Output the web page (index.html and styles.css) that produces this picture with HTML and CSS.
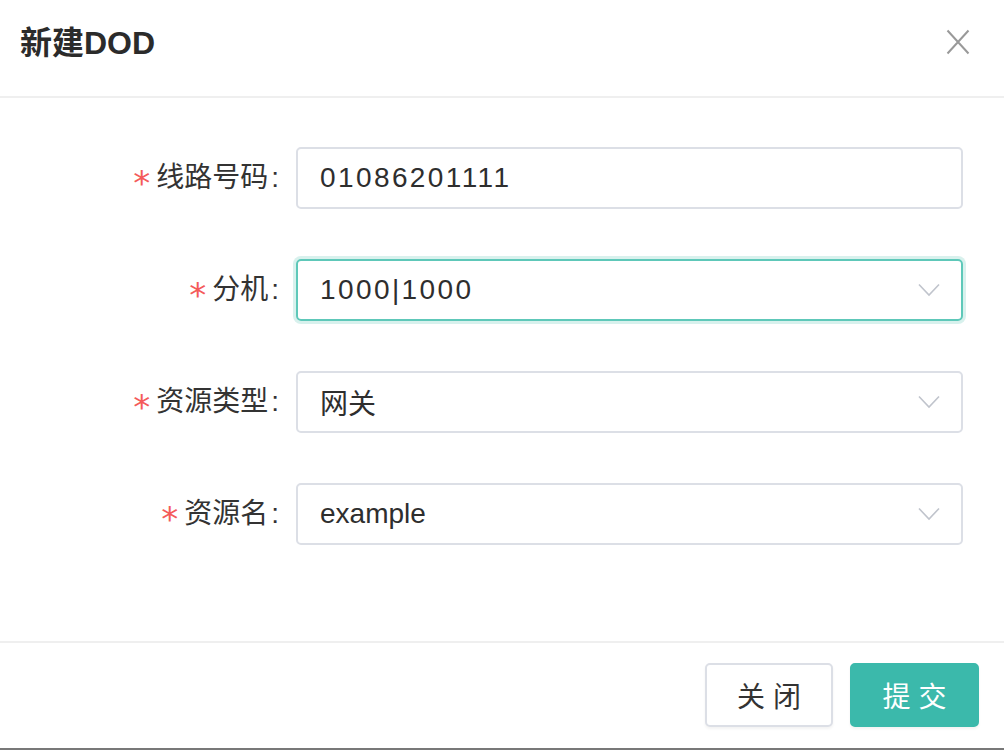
FILE: index.html
```
<!DOCTYPE html>
<html lang="zh-CN">
<head>
<meta charset="utf-8">
<title>新建DOD</title>
<link rel="stylesheet" href="styles.css">
</head>
<body>
<div class="dialog">
  <header class="dialog-header">
    <h1 class="dialog-title">新建DOD</h1>
    <button class="close-btn" type="button" aria-label="关闭">
      <svg width="24" height="26" viewBox="0 0 24 26"><path d="M1.5 1.5 L22.5 24.5 M22.5 1.5 L1.5 24.5" stroke="#999" stroke-width="2" fill="none"/></svg>
    </button>
  </header>
  <main class="dialog-body">
    <div class="form-row">
      <label class="form-label"><span class="req">*</span>线路号码<span class="colon">:</span></label>
      <div class="field"><span class="value num">01086201111</span></div>
    </div>
    <div class="form-row">
      <label class="form-label"><span class="req">*</span>分机<span class="colon">:</span></label>
      <div class="field select focused"><span class="value num">1000|1000</span>
        <svg class="arrow" width="22" height="14" viewBox="0 0 22 14"><path d="M1 1.5 L11 12 L21 1.5" stroke="#c0c4cc" stroke-width="1.6" fill="none"/></svg>
      </div>
    </div>
    <div class="form-row">
      <label class="form-label"><span class="req">*</span>资源类型<span class="colon">:</span></label>
      <div class="field select"><span class="value">网关</span>
        <svg class="arrow" width="22" height="14" viewBox="0 0 22 14"><path d="M1 1.5 L11 12 L21 1.5" stroke="#c0c4cc" stroke-width="1.6" fill="none"/></svg>
      </div>
    </div>
    <div class="form-row">
      <label class="form-label"><span class="req">*</span>资源名<span class="colon">:</span></label>
      <div class="field select"><span class="value">example</span>
        <svg class="arrow" width="22" height="14" viewBox="0 0 22 14"><path d="M1 1.5 L11 12 L21 1.5" stroke="#c0c4cc" stroke-width="1.6" fill="none"/></svg>
      </div>
    </div>
  </main>
  <footer class="dialog-footer">
    <button class="btn btn-default" type="button">关 闭</button>
    <button class="btn btn-primary" type="button">提 交</button>
  </footer>
</div>
</body>
</html>
```
FILE: styles.css
```
html, body {
  margin: 0;
  padding: 0;
}
body {
  background: #787878;
  font-family: "Liberation Sans", "Noto Sans CJK SC", sans-serif;
  color: #333;
}
.dialog {
  background: #fff;
  height: 748px;
  display: flex;
  flex-direction: column;
}
.dialog-header {
  box-sizing: border-box;
  height: 98px;
  padding: 23px 34px 0 20px;
  border-bottom: 2px solid #efefef;
  display: flex;
  justify-content: space-between;
  align-items: flex-start;
}
.dialog-title {
  margin: 0;
  font-size: 32px;
  line-height: 40px;
  font-weight: bold;
  color: #2b2b2b;
}
.close-btn {
  border: 0;
  background: none;
  padding: 0;
  margin-top: 6px;
  width: 24px;
  height: 26px;
  display: flex;
}
.dialog-body {
  padding: 49px 41px 96px 0;
  display: flex;
  flex-direction: column;
  gap: 50px;
}
.form-row {
  display: flex;
  align-items: center;
}
.form-label {
  box-sizing: border-box;
  width: 296px;
  padding-right: 17px;
  display: flex;
  justify-content: flex-end;
  align-items: center;
  font-size: 28px;
  line-height: 40px;
  color: #333;
}
.req {
  color: #f45a5a;
  margin-right: 6px;
  font-family: "DejaVu Sans", sans-serif;
  font-size: 34px;
  line-height: 34px;
  padding-top: 10px;
}
.colon {
  margin-left: 3px;
}
.field {
  flex: 1;
  box-sizing: border-box;
  height: 62px;
  border: 2px solid #dcdfe6;
  border-radius: 5px;
  padding: 0 22px 0 22px;
  display: flex;
  align-items: center;
  justify-content: space-between;
  font-size: 28px;
  color: #2e2e2e;
}
.field.focused {
  border-color: #5ec8b9;
  box-shadow: 0 0 0 3px #d8f1ed;
}
.value.num {
  letter-spacing: 2.4px;
}
.arrow {
  margin-right: -1px;
}
.dialog-footer {
  border-top: 2px solid #efefef;
  padding: 20px 25px 0 0;
  display: flex;
  justify-content: flex-end;
  gap: 17px;
}
.btn {
  box-sizing: border-box;
  height: 64px;
  border-radius: 5px;
  font-family: "Liberation Sans", "Noto Sans CJK SC", sans-serif;
  font-size: 28px;
  padding: 0;
  box-shadow: 0 2px 3px rgba(0, 0, 0, 0.05);
}
.btn-default {
  width: 128px;
  background: #fff;
  border: 2px solid #dcdfe6;
  color: #333;
}
.btn-primary {
  width: 129px;
  background: #3bb9ab;
  border: 2px solid #3bb9ab;
  color: #fff;
}
```
